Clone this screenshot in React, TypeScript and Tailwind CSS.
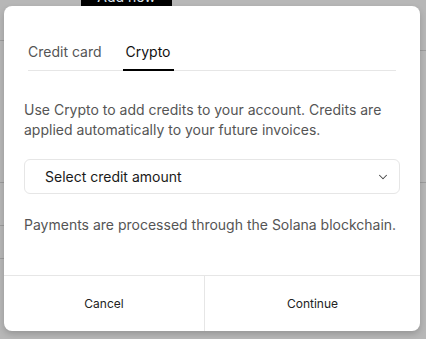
import React, { useState } from 'react';
import { ChevronDown } from 'lucide-react';

const font = { fontFamily: 'Inter, "Noto Sans", sans-serif' };

const tabs = ['Credit card', 'Crypto'];

export default function App() {
  const [active, setActive] = useState('Crypto');

  return (
    <div className="relative w-[426px] h-[339px] overflow-hidden bg-[#b7b7b7]" style={font}>
      {/* page behind the overlay */}
      <div className="flex flex-col h-full">
        <div className="h-[6px] pl-[81px]">
          <div className="-mt-[12px] w-[91px] h-[18px] bg-black text-[#dfe6f0] text-[14px] leading-[18px] text-center">
            Add new
          </div>
        </div>
        <div className="flex flex-1 justify-between">
          <div className="w-[4px] flex flex-col">
            <div className="h-[35px] border-b border-[#9c9c9c]" />
            <div className="h-[142px] border-b border-[#9c9c9c]" />
            <div className="h-[43px] border-b border-[#9c9c9c]" />
            <div className="h-[33px] border-b border-[#9c9c9c]" />
          </div>
          <div className="w-[6px] flex flex-col">
            <div className="h-[45px] border-b border-[#9c9c9c]" />
            <div className="h-[132px] border-b border-[#9c9c9c]" />
          </div>
        </div>
      </div>

      {/* dialog */}
      <div className="absolute left-[4px] top-[6px] w-[416px] h-[325px] bg-white rounded-[8px] shadow-[0_3px_6px_rgba(0,0,0,0.18)] flex flex-col">
        <div className="pt-[36px] pl-[24px] pr-[24px]">
          <div className="flex gap-[21px] border-b border-[#e6e6e6]">
            {tabs.map((t) => (
              <button
                key={t}
                onClick={() => setActive(t)}
                className={
                  'text-[14px] leading-[20px] pb-[7px] border-b-2 -mb-px ' +
                  (active === t
                    ? 'border-black text-[#111] px-[3px]'
                    : 'border-transparent text-[#555]')
                }
              >
                {t}
              </button>
            ))}
          </div>
        </div>

        <div className="px-[20px] pt-[29px]">
          <p className="text-[14px] leading-[20px] text-[#555]">
            Use Crypto to add credits to your account. Credits are applied automatically to your future invoices.
          </p>

          <button className="mt-[19px] w-full h-[35px] flex items-center justify-between border border-[#e6e6e6] rounded-[6px] pl-[20px] pr-[9px]">
            <span className="text-[14px] text-[#1a1a1a]">Select credit amount</span>
            <ChevronDown className="w-[14px] h-[14px] text-[#444]" strokeWidth={1.75} />
          </button>

          <p className="mt-[21px] text-[14px] leading-[20px] text-[#555] whitespace-nowrap">
            Payments are processed through the Solana blockchain.
          </p>
        </div>

        <div className="mt-auto flex h-[56px] border-t border-[#e6e6e6]">
          <button className="w-[201px] text-[12px] text-[#222] border-r border-[#e6e6e6]">Cancel</button>
          <button className="flex-1 text-[12px] text-[#222]">Continue</button>
        </div>
      </div>
    </div>
  );
}
